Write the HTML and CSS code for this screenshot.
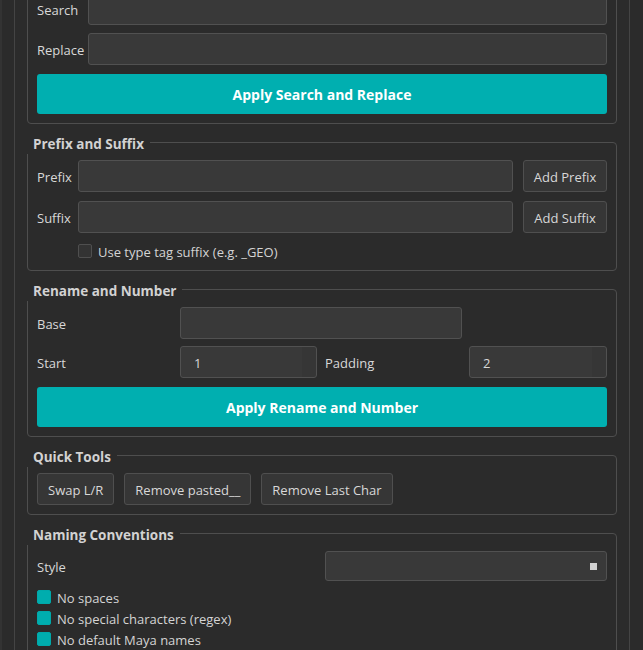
FILE: index.html
```html
<!DOCTYPE html>
<html lang="en">
<head>
<meta charset="utf-8">
<title>Rename Tools</title>
<link rel="stylesheet" href="styles.css">
</head>
<body>
<div class="edge">
  <div class="frame">
    <div class="stack">

      <section class="group">
        <div class="form-row">
          <label class="label label-sr">Search</label>
          <div class="field"></div>
        </div>
        <div class="form-row gap-8">
          <label class="label label-sr">Replace</label>
          <div class="field"></div>
        </div>
        <button class="btn-primary gap-9">Apply Search and Replace</button>
      </section>

      <section class="group">
        <h3 class="group-title">Prefix and Suffix</h3>
        <div class="form-row">
          <label class="label label-ps">Prefix</label>
          <div class="field"></div>
          <button class="btn btn-side">Add Prefix</button>
        </div>
        <div class="form-row gap-9">
          <label class="label label-ps">Suffix</label>
          <div class="field"></div>
          <button class="btn btn-side">Add Suffix</button>
        </div>
        <div class="check-row indent-ps">
          <span class="check"></span>
          <span class="check-text">Use type tag suffix (e.g. _GEO)</span>
        </div>
      </section>

      <section class="group">
        <h3 class="group-title">Rename and Number</h3>
        <div class="grid-rn">
          <label class="label">Base</label>
          <div class="field span-2"></div>
          <span></span>
          <label class="label">Start</label>
          <div class="field spin">1</div>
          <label class="label label-pad">Padding</label>
          <div class="field spin">2</div>
        </div>
        <button class="btn-primary gap-9">Apply Rename and Number</button>
      </section>

      <section class="group">
        <h3 class="group-title">Quick Tools</h3>
        <div class="tool-row">
          <button class="btn">Swap L/R</button>
          <button class="btn">Remove pasted__</button>
          <button class="btn">Remove Last Char</button>
        </div>
      </section>

      <section class="group">
        <h3 class="group-title">Naming Conventions</h3>
        <div class="grid-style">
          <label class="label">Style</label>
          <div class="combo"><span class="combo-arrow"></span></div>
        </div>
        <div class="check-list">
          <div class="check-row small"><span class="check on"></span><span class="check-text">No spaces</span></div>
          <div class="check-row small"><span class="check on"></span><span class="check-text">No special characters (regex)</span></div>
          <div class="check-row small"><span class="check on"></span><span class="check-text">No default Maya names</span></div>
        </div>
      </section>

    </div>
  </div>
</div>
</body>
</html>
```

FILE: styles.css
```css
* {
  box-sizing: border-box;
}

html,
body {
  margin: 0;
  height: 100%;
  overflow: hidden;
  background: #2b2b2b;
}

body {
  font-family: "Open Sans", "Noto Sans", sans-serif;
  font-size: 13px;
  color: #d6d6d6;
}

/* thin lighter strip along the window edge */
.edge {
  border-left: 2px solid #333333;
  min-height: 100%;
}

/* scroll area frame; the view is scrolled slightly so the first group is clipped */
.frame {
  margin-left: 12px;
  width: 616px;
  margin-top: -40px;
  padding: 15px 12px 0;
  border-left: 1px solid #444444;
  border-right: 1px solid #444444;
  min-height: 760px;
}

.stack {
  display: flex;
  flex-direction: column;
  gap: 18px;
}

/* group box */
.group {
  position: relative;
  border: 1px solid #4e4e4e;
  border-radius: 4px;
  padding: 17px 9px 9px;
}

.group-title {
  position: absolute;
  top: -9px;
  left: -1px;
  margin: 0;
  padding: 0 6px;
  line-height: 20px;
  font-size: 13.5px;
  font-weight: 700;
  color: #d2d2d2;
  background: #2b2b2b;
}

.form-row {
  display: flex;
  align-items: center;
}

.gap-8 { margin-top: 8px; }
.gap-9 { margin-top: 9px; }

.label {
  color: #d8d8d8;
  line-height: 18px;
  padding-top: 2px;
  white-space: nowrap;
}

.label-sr { width: 51px; flex: none; }
.label-ps { width: 41px; flex: none; }
.label-pad { padding-left: 1px; }

/* line edit */
.field {
  flex: 1;
  height: 32px;
  background: #393939;
  border: 1px solid #515151;
  border-radius: 3px;
}

/* spin box with hidden step buttons on the right */
.spin {
  display: flex;
  align-items: center;
  padding-left: 13px;
  padding-top: 1px;
  color: #d8d8d8;
  background: linear-gradient(to left, #363636 14px, #393939 14px);
}

.btn {
  height: 32px;
  padding: 1px 10px 0;
  font: inherit;
  color: #d8d8d8;
  background: #363636;
  border: 1px solid #4f4f4f;
  border-radius: 3px;
  white-space: nowrap;
}

.btn-side {
  flex: none;
  width: 84px;
  margin-left: 10px;
  padding: 1px 0 0;
}

.btn-primary {
  display: block;
  width: 100%;
  height: 40px;
  padding-top: 1px;
  font: inherit;
  font-size: 14px;
  font-weight: 700;
  color: #ffffff;
  background: #00afb0;
  border: none;
  border-radius: 3px;
}

.check-row {
  display: flex;
  align-items: center;
  gap: 6px;
  height: 20px;
  margin-top: 8px;
}

.indent-ps { padding-left: 41px; }

.check {
  flex: none;
  width: 14px;
  height: 14px;
  border: 1px solid #4f4f4f;
  border-radius: 2px;
  background: #333333;
}

.check.on {
  border-color: #00a9aa;
  background: #00adae;
}

.check-text {
  color: #d4d4d4;
  line-height: 18px;
  padding-top: 1px;
}

/* rename grid: label | field | label | field */
.grid-rn {
  display: grid;
  grid-template-columns: 136px 137px 138px 1fr;
  column-gap: 7px;
  row-gap: 7px;
  align-items: center;
}

.span-2 {
  grid-column: span 2;
}

.tool-row {
  display: flex;
  gap: 10px;
}

.grid-style {
  display: grid;
  grid-template-columns: 1fr 282px;
  column-gap: 6px;
  align-items: center;
}

.combo {
  height: 30px;
  display: flex;
  align-items: center;
  justify-content: flex-end;
  padding-right: 9px;
  background: #393939;
  border: 1px solid #515151;
  border-radius: 3px;
}

.combo-arrow {
  width: 7px;
  height: 7px;
  background: #d2d2d2;
}

.check-list {
  display: flex;
  flex-direction: column;
  gap: 7px;
  margin-top: 9px;
}

.check-row.small {
  height: 14px;
  margin-top: 0;
}
```
